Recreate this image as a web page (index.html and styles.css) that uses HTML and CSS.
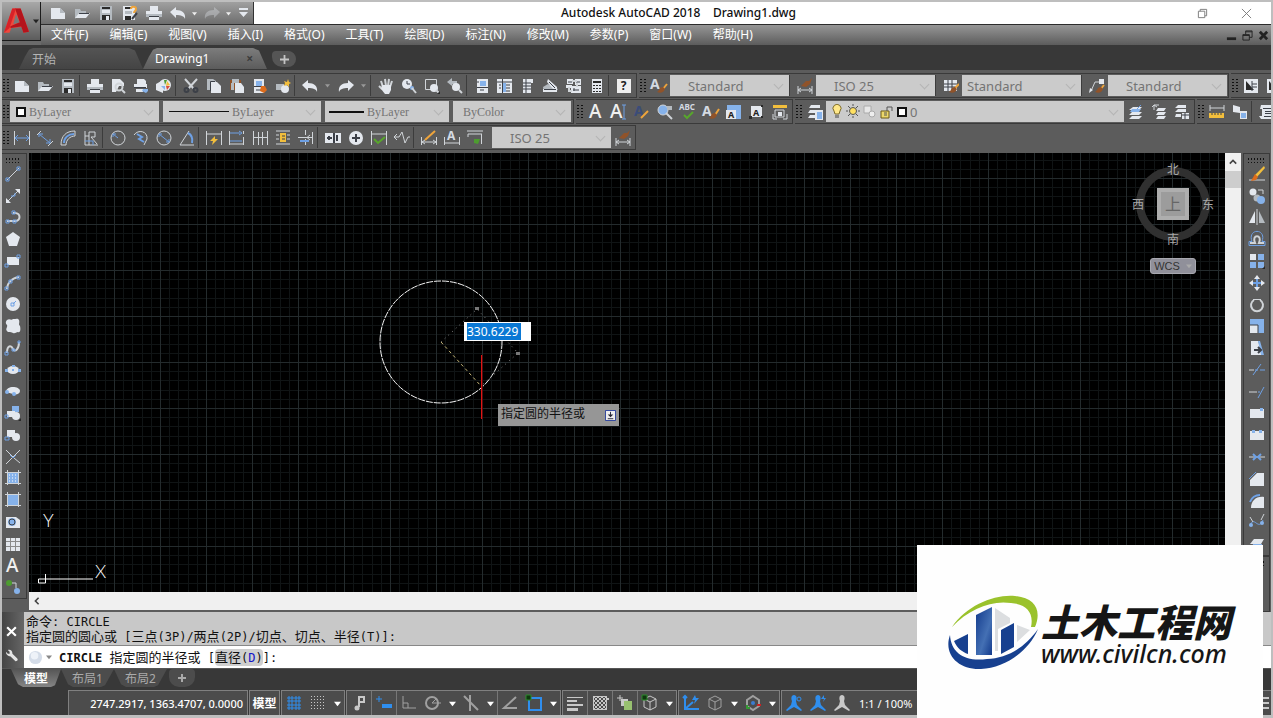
FILE: index.html
```html
<!DOCTYPE html>
<html lang="zh-CN">
<head>
<meta charset="utf-8">
<title>Autodesk AutoCAD 2018 Drawing1.dwg</title>
<link rel="stylesheet" href="styles.css">
</head>
<body>
<svg class="defs" aria-hidden="true">
  <symbol id="new" viewBox="0 0 16 16"><path class="fw" d="M1 3h9l5 5v6H1z"/><path class="fd" d="M10 3v5h5z"/></symbol>
  <symbol id="open" viewBox="0 0 16 16"><path class="fd" d="M1 4h5l1 2h5v2H5l-4 6z"/><path class="fw" d="M5 8h11l-4 5H1z"/><path class="k" d="M5 8.500h10"/></symbol>
  <symbol id="save" viewBox="0 0 16 16"><path class="fd" d="M2 1h12v14H2z"/><path class="fk" d="M4 2h8v2H4zM4 10h8v5H4z"/><path class="fw" d="M4 5h8v3H4zM8 11h3v4H8z"/></symbol>
  <symbol id="print" viewBox="0 0 16 16"><path class="fw" d="M4 1h8v5H4zM0 6h16v5H0z"/><path class="fd" d="M0 9h16v3H0z"/><path class="fw" d="M3 11h10v4H3z"/><path class="k" d="M3 11.500h10"/></symbol>
  <symbol id="undo" viewBox="0 0 16 16"><path class="fw" d="M0 7l6-5v3c6 0 10 3 9 9-1-3-4-4-9-4v3z"/></symbol>
  <symbol id="redo" viewBox="0 0 16 16"><path class="fw" d="M16 7l-6-5v3C4 5 0 8 1 14c1-3 4-4 9-4v3z"/></symbol>
  <symbol id="down" viewBox="0 0 8 8"><path d="M0 2h8L4 7z" fill="currentColor"/></symbol>
  <symbol id="dimbrush" viewBox="0 0 16 16"><path class="s" d="M1 8v8M15 8v8M1 12h14M1 12l3-2M1 12l3 2M15 12l-3-2M15 12l-3 2"/><path class="fbr" d="M4 8l5-5h3l3-3-2 6-4 3z"/></symbol>
  <symbol id="tabstyle" viewBox="0 0 16 16"><path class="fw" d="M1 2h13v11H1z"/><path class="k" d="M1 6h13M1 9h13M5 2v11M9 2v11"/><path class="o2" d="M16 6l-5 5"/><path class="fbr" d="M12 9c-4 0-3 3-6 5 4 2 7 0 8-3z"/></symbol>
  <symbol id="person" viewBox="0 0 16 16"><path d="M8 0c3 0 3 4 2 6l1 4 5 5-1 1-7-4-7 4-1-1 5-5 1-4C5 4 5 0 8 0z" fill="currentColor"/></symbol>
  <symbol id="cube" viewBox="0 0 16 16"><path d="M8 1l6 3v8l-6 3-6-3V4zM2 4l6 3 6-3M8 7v8" fill="none" stroke="currentColor"/></symbol>
</svg>

<div class="app">
  <header class="header">
    <button class="app-button" aria-label="应用程序菜单"><svg class="app-logo" viewBox="0 0 28 30"><path fill="#f0483c" d="M1 27L10 1h9l9 25-6 1-2-6-11 1-2 5z"/><path fill="#7a7a7a" d="M14 7l4 9-7 2z"/><path fill="#b4141c" d="M13 1h6l9 25-6 1zM8 20l12-5 1 5-13 2z"/><path fill="#d82228" d="M1 27L10 1h4L7 22z"/></svg><svg class="caret"><use href="#down"/></svg></button>
    <div class="titlebar">
      <nav class="quick" aria-label="快速访问">
        <button class="tool" aria-label="新建"><svg><use href="#new"/></svg></button>
        <button class="tool" aria-label="打开"><svg><use href="#open"/></svg></button>
        <button class="tool" aria-label="保存"><svg><use href="#save"/></svg></button>
        <button class="tool" aria-label="另存为"><svg viewBox="0 0 16 16"><path class="fw" d="M1 1h12v14H1z"/><path class="fk" d="M3 2h7v2H3zM3 11h6v4H3z"/><path class="fd" d="M3 6h7v3H3z"/><path class="k2" d="M15 8l-5 6"/><path class="o2" d="M9 4c0-3 5-3 5 0 0 2-2 2-2 4"/></svg></button>
        <button class="tool" aria-label="打印"><svg><use href="#print"/></svg></button>
        <button class="tool" aria-label="放弃"><svg><use href="#undo"/></svg></button>
        <button class="drop" aria-label="放弃列表"><svg><use href="#down"/></svg></button>
        <button class="tool off" aria-label="重做"><svg><use href="#redo"/></svg></button>
        <button class="drop" aria-label="重做列表"><svg><use href="#down"/></svg></button>
        <button class="tool" aria-label="自定义"><svg viewBox="0 0 16 16"><path class="fw" d="M4 3h9v2H4zM4 7h9l-4.500 5z"/></svg></button>
      </nav>
      <h1 class="title">Autodesk AutoCAD 2018 &nbsp;&nbsp; Drawing1.dwg</h1>
      <div class="window-buttons">
        <button aria-label="还原"><svg viewBox="0 0 12 12"><path d="M1.500 3.500h7v7h-7zM3.500 3.500v-2h7v7h-2" fill="none" stroke="#777"/></svg></button>
        <button aria-label="关闭"><svg viewBox="0 0 12 12"><path d="M1 1l10 10M11 1L1 11" fill="none" stroke="#777"/></svg></button>
      </div>
    </div>
    <div class="menubar">
      <nav class="menu">
        <button>文件(F)</button><button>编辑(E)</button><button>视图(V)</button><button>插入(I)</button><button>格式(O)</button><button>工具(T)</button><button>绘图(D)</button><button>标注(N)</button><button>修改(M)</button><button>参数(P)</button><button>窗口(W)</button><button>帮助(H)</button>
      </nav>
      <div class="doc-buttons">
        <button aria-label="最小化图形"><svg viewBox="0 0 12 12"><path d="M1 8h10v3H1z" fill="#222"/></svg></button>
        <button aria-label="还原图形"><svg viewBox="0 0 12 12"><path d="M1 5h7v6H1zM4 5V1h7v7H8M4 2h7M1 6h7" fill="none" stroke="#222"/></svg></button>
        <button aria-label="关闭图形"><svg viewBox="0 0 12 12"><path d="M2 2l8 8M10 2l-8 8" fill="none" stroke="#222" stroke-width="3"/></svg></button>
      </div>
    </div>
  </header>

  <nav class="file-tabs">
    <button class="file-tab">开始</button>
    <button class="file-tab current"><span>Drawing1</span><span class="tab-close">×</span></button>
    <button class="file-add" aria-label="新图形"><svg viewBox="0 0 10 10"><path d="M5 0v10M0 5h10" stroke="#c4c4c4" stroke-width="2"/></svg></button>
  </nav>

  <div class="toolbars">
    <div class="row">
      <div class="bar">
        <span class="grip"></span>
        <button class="tool" aria-label="新建"><svg><use href="#new"/></svg></button>
        <button class="tool" aria-label="打开"><svg><use href="#open"/></svg></button>
        <button class="tool" aria-label="保存"><svg><use href="#save"/></svg></button>
        <i class="sep"></i>
        <button class="tool" aria-label="打印"><svg><use href="#print"/></svg></button>
        <button class="tool" aria-label="打印预览"><svg viewBox="0 0 16 16"><path class="fw" d="M2 1h8l4 4v3H9l-3 6H2z"/><circle class="s2" cx="9" cy="9" r="3.500"/><path class="s2" d="M12 12l3 3"/></svg></button>
        <button class="tool" aria-label="发布"><svg viewBox="0 0 16 16"><path class="fw" d="M4 1h7l2 2v3H4zM1 6h13v4H1z"/><path class="k" d="M1 9.500h12"/><path class="fw" d="M3 11h7v3H3z"/><path class="fb" d="M10 11h5v2l-2 2-4-2z"/></svg></button>
        <button class="tool" aria-label="三维打印"><svg viewBox="0 0 16 16"><path class="fw" d="M0 6l7-4v13l-7-3z"/><circle class="fw" cx="9" cy="7" r="6"/><path class="fg" d="M8 2h3l-2 5z"/><path class="fy" d="M11 3l3 4-4 1z"/><path class="fr" d="M10 8h4l-3 4z"/><path class="fb" d="M5 8h4v4z"/></svg></button>
        <i class="sep"></i>
        <button class="tool" aria-label="剪切"><svg viewBox="0 0 16 16"><path class="s2" d="M2 1l9 10M14 1L5 11"/><circle class="k2" cx="3.500" cy="12" r="2"/><circle class="k2" cx="12.500" cy="12" r="2"/></svg></button>
        <button class="tool" aria-label="复制"><svg viewBox="0 0 16 16"><path class="fd" d="M1 1h6l3 2v9H1z"/><path class="k" d="M4.500 13V3.500H9"/><path class="fw" d="M5 4h6l4 4v7H5z"/></svg></button>
        <button class="tool" aria-label="粘贴"><svg viewBox="0 0 16 16"><path class="fbr" d="M1 2h11v10H1z"/><path class="fd" d="M3 1h7v4H3zM2 5h3v7H2z"/><path class="fw" d="M6 5h6l3 4v6H6z"/></svg></button>
        <button class="tool" aria-label="特性匹配"><svg viewBox="0 0 16 16"><path class="fw" d="M2 1h10v14H2z"/><path class="fb" d="M4 3h6v5H4z"/><path class="k" d="M2 8.500h10M4 12h5"/><path class="fo" d="M9 8h4l2 4-3 3-4-2z"/></svg></button>
        <button class="tool" aria-label="块编辑器"><svg viewBox="0 0 16 16"><path class="fd" d="M1 6h8v6H1z"/><circle class="fw" cx="10" cy="11" r="4"/><path class="fy" d="M9 3l3 1 1-3 1 3 2 1-2 1v3l-2-2-3 1 1-3z"/></svg></button>
        <i class="sep"></i>
        <button class="tool" aria-label="放弃"><svg><use href="#undo"/></svg></button>
        <button class="drop dim" aria-label="放弃列表"><svg><use href="#down"/></svg></button>
        <button class="tool" aria-label="重做"><svg><use href="#redo"/></svg></button>
        <button class="drop dim" aria-label="重做列表"><svg><use href="#down"/></svg></button>
        <i class="sep"></i>
        <button class="tool" aria-label="实时平移"><svg viewBox="0 0 16 16"><path class="s2" d="M5 9L3 3M8 8L7 1M10 8l1-7M12 9l2-6M4 11L1 8"/><path class="fw" d="M4 7h9v5l-2 4H7l-4-5z"/></svg></button>
        <button class="tool" aria-label="实时缩放"><svg viewBox="0 0 16 16"><circle class="fw" cx="6" cy="6" r="5"/><path class="k" d="M6 3v3h3"/><circle class="fb" cx="11" cy="10" r="2"/><path class="s2" d="M11 10l4 5"/></svg></button>
        <button class="tool" aria-label="窗口缩放"><svg viewBox="0 0 16 16"><path class="s" d="M1.500 1.500h11v10h-11z"/><circle class="fw" cx="10" cy="10" r="4"/><path class="s2" d="M12 12l3 3"/><path class="fk" d="M16 13v3h-3z"/></svg></button>
        <button class="tool" aria-label="缩放上一个"><svg viewBox="0 0 16 16"><path class="fd" d="M0 4l5-4v3h5v3H5v2z"/><circle class="fw" cx="9" cy="9" r="4"/><path class="s2" d="M12 12l3 3"/></svg></button>
        <i class="sep"></i>
        <button class="tool" aria-label="特性"><svg viewBox="0 0 16 16"><path class="fw" d="M3 1h11v14H3z"/><path class="fb" d="M6 3h6v5H6z"/><path class="k" d="M3 9.500h11M6 12h4M3 4h2"/></svg></button>
        <button class="tool" aria-label="设计中心"><svg viewBox="0 0 16 16"><path class="fw" d="M0 1h15v14H0z"/><path class="k" d="M5.500 1v14M0 4h15M8 7h5M8 10h5M8 13h5M2 7h2M2 10h2"/><path class="fb" d="M6 5h3v9H6z"/></svg></button>
        <button class="tool" aria-label="工具选项板"><svg viewBox="0 0 16 16"><path class="fw" d="M3 1h10v4h-2v10H3z"/><path class="k" d="M3 5h8M3 8h8M3 11h8M6 1v14"/></svg></button>
        <button class="tool" aria-label="图纸集"><svg viewBox="0 0 16 16"><path class="fd" d="M0 9l5-3 10 5-2 3H1z"/><path class="fw" d="M5 1l9 8v3l-4-1-6-7zM0 11h14v3H0z"/><path class="k" d="M6 4l6 6M1 11.500h12"/></svg></button>
        <button class="tool" aria-label="标记集"><svg viewBox="0 0 16 16"><path class="fw" d="M1 1h6v5H1zM9 1h6v6H9zM5 8h10v7H5zM0 7h6v3H0z"/><path class="k" d="M2 4h4M10 4h4M7 12h6M8 10v3"/><path class="s2" d="M3 9v4h3M11 5v4M6 3h5"/></svg></button>
        <button class="tool" aria-label="计算器"><svg viewBox="0 0 16 16"><path class="fw" d="M3 1h10v14H3z"/><path class="fk" d="M4 3h8v2H4zM4 7h2v1H4zM7 7h2v1H7zM10 7h2v1h-2zM4 10h2v1H4zM7 10h2v1H7zM10 10h2v1h-2zM4 13h2v1H4zM7 13h2v1H7zM10 13h2v1h-2z"/></svg></button>
        <i class="sep"></i>
        <button class="tool help" aria-label="帮助"><span>?</span></button>
      </div>
      <div class="bar">
        <span class="grip"></span>
        <button class="tool" aria-label="文字样式"><svg viewBox="0 0 16 16"><text class="ico-text" x="-1" y="11">A</text><path class="o2" d="M16 6l-4 5"/><path class="fbr" d="M12 9c-4 0-3 3-6 5 4 2 7 0 8-3z"/></svg></button>
        <span class="combo wide"><select aria-label="文字样式"><option>Standard</option></select></span>
        <i class="sep"></i>
        <button class="tool" aria-label="标注样式"><svg><use href="#dimbrush"/></svg></button>
        <span class="combo wide"><select aria-label="标注样式"><option>ISO 25</option></select></span>
        <i class="sep"></i>
        <button class="tool" aria-label="表格样式"><svg><use href="#tabstyle"/></svg></button>
        <span class="combo wide near"><select aria-label="表格样式"><option>Standard</option></select></span>
        <i class="sep"></i>
        <button class="tool" aria-label="多重引线样式"><svg viewBox="0 0 16 16"><path class="s" d="M2 13L6 4h5"/><path class="fw" d="M10 1h5v5h-5z"/><path class="fw" d="M0 15l1-5 3 2z"/><path class="o2" d="M15 7l-4 5"/><path class="fbr" d="M12 9c-4 0-3 3-6 5 4 2 7 0 8-3z"/></svg></button>
        <span class="combo wide"><select aria-label="多重引线样式"><option>Standard</option></select></span>
      </div>
      <div class="bar rest">
        <span class="grip"></span>
        <button class="tool" aria-label="视口"><svg viewBox="0 0 16 16"><path class="fw" d="M1 1h14v14H1z"/><path class="fk" d="M3 3v9h8z"/><path class="k" d="M9 3v10M9 6h5M9 9h5"/></svg></button>
        <button class="tool" aria-label="单个视口"><svg viewBox="0 0 16 16"><path class="fw" d="M1 1h14v14H1z"/><path class="fk" d="M3 3v9h8z"/></svg></button>
      </div>
    </div>

    <div class="row">
      <div class="bar props">
        <span class="grip"></span>
        <span class="combo serif c1"><i class="swatch"></i><select aria-label="颜色"><option>ByLayer</option></select></span>
        <span class="combo serif c2"><i class="line thin"></i><select aria-label="线型"><option>ByLayer</option></select></span>
        <span class="combo serif c3"><i class="line"></i><select aria-label="线宽"><option>ByLayer</option></select></span>
        <span class="combo serif c4"><select aria-label="打印样式"><option>ByColor</option></select></span>
      </div>
      <div class="bar">
        <span class="grip"></span>
        <button class="tool" aria-label="多行文字"><svg viewBox="0 0 16 16"><text class="ico-text big" x="1" y="14">A</text></svg></button>
        <button class="tool" aria-label="单行文字"><svg viewBox="0 0 16 16"><text class="ico-text big" x="-1" y="14">A</text><path class="b" d="M11 1h4M13 1v14M11 15h4"/></svg></button>
        <button class="tool" aria-label="编辑文字"><svg viewBox="0 0 16 16"><text class="ico-text blue" x="0" y="12">A</text><path class="o2" d="M14 7l-7 7"/></svg></button>
        <button class="tool" aria-label="查找"><svg viewBox="0 0 16 16"><circle class="fb" cx="6" cy="6" r="5"/><circle class="s" cx="6" cy="6" r="5"/><path class="s2" d="M9 9l6 6"/><path class="fd" d="M10 2h5v4h-5z"/></svg></button>
        <button class="tool" aria-label="拼写检查"><svg viewBox="0 0 16 16"><text class="ico-text tiny" x="-1" y="6">ABC</text><path class="g2" d="M4 11l3 3 6-6"/></svg></button>
        <button class="tool" aria-label="文字样式"><svg viewBox="0 0 16 16"><text class="ico-text" x="-1" y="12">A</text><path class="o2" d="M16 5l-4 6"/><path class="fbr" d="M12 9c-4 0-3 3-6 5 4 2 7 0 8-3z"/></svg></button>
        <button class="tool" aria-label="比例"><svg viewBox="0 0 16 16"><path class="fb" d="M1 1h14v14h-5V6H1z"/><path class="fw" d="M0 6h10v9H0z"/><text class="ico-text dark" x="2" y="14">A</text></svg></button>
        <button class="tool" aria-label="对正"><svg viewBox="0 0 16 16"><path class="fw" d="M2 2h11v11H2z"/><text class="ico-text dark" x="4" y="12">A</text><path class="fk" d="M0 12h3v3H0zM12 1h2v2h-2zM12 12h2v2h-2z"/></svg></button>
        <button class="tool" aria-label="空间转换"><svg viewBox="0 0 16 16"><path class="fy" d="M1 1h14v3H1z"/><path class="s" d="M3 6h9v7H3zM1 10v5h4M15 10v5h-4"/><path class="fw" d="M6 8h4v4H6z"/></svg></button>
      </div>
      <div class="bar">
        <span class="grip"></span>
        <button class="tool" aria-label="图层特性"><svg viewBox="0 0 16 16"><path class="fw" d="M4 1h9v3H2zM3 6h6v3H1zM3 11h5v3H1z"/><path class="fw" d="M8 6h8v10H8z"/><path class="fb" d="M10 8h5v7h-5z"/></svg></button>
        <span class="combo layer">
          <span class="layer-icons"><svg viewBox="0 0 64 16">
            <path d="M3 7a4 4 0 1 1 6 0l-1 3H4z" fill="#ffe88a" stroke="#7c6a28"/><path d="M4 11h4v3H4z" fill="#888"/>
            <circle cx="22" cy="7" r="3.500" fill="#ffe060" stroke="#555"/><path d="M22 0v2M22 12v2M15 7h2M27 7h2M17 2l2 2M27 2l-2 2M17 12l2-2M27 12l-2-2" stroke="#555"/>
            <path d="M33 2h7v7h-7z" fill="#e8e8e8" stroke="#aaa"/><circle cx="41" cy="10" r="3" fill="#eee" stroke="#aaa"/>
            <path d="M50 7h8v7h-8z" fill="#ecd76a" stroke="#6d5a18"/><path d="M56 7V3h5v4M53 9h3M53 11h3" fill="none" stroke="#555"/></svg></span>
          <i class="swatch"></i><select aria-label="图层"><option>0</option></select></span>
        <button class="tool" aria-label="置为当前"><svg viewBox="0 0 16 16"><path class="fw" d="M5 3h9l-3 3H1zM4 8h10l-3 3H1zM4 12h10l-3 3H1z"/><path class="fb" d="M4 5h9l-2 3H2z"/><path class="b" d="M9 5l4-4"/></svg></button>
        <button class="tool" aria-label="上一个图层"><svg viewBox="0 0 16 16"><path class="fw" d="M7 4h8l-2 3H5zM7 8h8l-2 3H5zM7 12h8l-2 3H5z"/><path class="s" d="M3 6V1h5M1 3l2-2 3 2"/></svg></button>
        <button class="tool" aria-label="图层状态"><svg viewBox="0 0 16 16"><path class="fw" d="M4 1h8v3H1zM4 5h8v3H1zM2 10h5v3H1zM8 9h7v6H8z"/><path class="k" d="M8 11h7M11 9v6"/></svg></button>
      </div>
      <div class="bar rest">
        <span class="grip"></span>
        <button class="tool" aria-label="距离"><svg viewBox="0 0 16 16"><path class="s" d="M1 1v6M15 1v6M1 4h14"/><path class="fy" d="M0 9h15v5H0z"/><path class="k" d="M3 9v2M6 9v2M9 9v2M12 9v2"/></svg></button>
        <button class="tool" aria-label="列表"><svg viewBox="0 0 16 16"><path class="fw" d="M1 1l7 2v6l-7-1zM8 7h7v8H8z"/><path class="fb" d="M9 9h5v5H9z"/></svg></button>
        <i class="sep"></i>
        <button class="tool" aria-label="查询"><svg viewBox="0 0 16 16"><path class="fw" d="M2 1h12l1 3H5v8h10v3H2l-2-3h3V5H1z"/><path class="fw" d="M5 5h9v7H5z"/><path class="k" d="M4 4.500h9M6 7.500h6M6 9.500h6M5 12.500h8"/></svg></button>
      </div>
    </div>

    <div class="row">
      <div class="bar">
        <span class="grip"></span>
        <button class="tool" aria-label="线性"><svg viewBox="0 0 16 16"><path class="s" d="M.5 1v14M15.500 1v14"/><path class="b" d="M1 8h14M4 5L1 8l3 3M12 5l3 3-3 3"/></svg></button>
        <button class="tool" aria-label="对齐"><svg viewBox="0 0 16 16"><path class="b" d="M2 4l11 9M2 7V4h4M13 9v4H9"/><path class="s" d="M4 1L0 5M16 11l-5 5"/></svg></button>
        <button class="tool" aria-label="弧长"><svg viewBox="0 0 16 16"><path class="s" d="M1 15C1 6 6 1 15 1M6 15c0-5 4-9 9-9M15 1v5M1 15h5"/><path class="b2" d="M4 13c0-5 4-9 10-9"/></svg></button>
        <button class="tool" aria-label="坐标"><svg viewBox="0 0 16 16"><path class="s" d="M2 1v14h13M6 15V2h6v5H8l6 7M2 6h4"/><path class="b" d="M2 11h8v4"/></svg></button>
        <i class="sep"></i>
        <button class="tool" aria-label="半径"><svg viewBox="0 0 16 16"><circle class="s" cx="8" cy="8" r="7"/><path class="b" d="M8 8L3 4M3 7V4h3"/></svg></button>
        <button class="tool" aria-label="折弯"><svg viewBox="0 0 16 16"><path class="s" d="M1 5C5-1 15 1 14 9l-3 6"/><path class="b2" d="M4 4l5 3-3 2 5 3"/></svg></button>
        <button class="tool" aria-label="直径"><svg viewBox="0 0 16 16"><circle class="s" cx="8" cy="8" r="7"/><path class="b" d="M3 4l10 8M3 7V4h3M13 9v3h-3"/></svg></button>
        <button class="tool" aria-label="角度"><svg viewBox="0 0 16 16"><path class="s" d="M15 15H1L10 1"/><path class="b2" d="M9 3c4 2 5 5 4 10"/></svg></button>
        <i class="sep"></i>
        <button class="tool" aria-label="快速标注"><svg viewBox="0 0 16 16"><path class="s" d="M.5 1v14M15.500 1v14M1 4h14"/><path class="fy" d="M9 6l-5 5h3l-1 4 6-6H9z"/></svg></button>
        <button class="tool" aria-label="基线"><svg viewBox="0 0 16 16"><path class="s" d="M.5 1v14M14.500 1v3M14.500 7v8M1 14h13"/><path class="b" d="M1 3h10M1 11h12M10 1l3 2-3 2"/></svg></button>
        <button class="tool" aria-label="连续"><svg viewBox="0 0 16 16"><path class="s" d="M1.500 1v14M6.500 2v13M10.500 2v13M15.500 1v14M1 7.500h14"/></svg></button>
        <button class="tool" aria-label="等距标注"><svg viewBox="0 0 16 16"><path class="s" d="M1 1h14M1 5h3M1 9h3M1 14h14M12 5h3M12 9h3"/><path class="fy" d="M5 3h6v9H5z"/><path class="k" d="M7 6h3M7 9h3"/></svg></button>
        <button class="tool" aria-label="折断标注"><svg viewBox="0 0 16 16"><path class="s" d="M14.500 2v12M0 7.500h14M7.500 0v5M7.500 9v6M12 5l-3 2.500 3 2.500"/><path class="b2" d="M2 11h9"/></svg></button>
        <i class="sep"></i>
        <button class="tool" aria-label="公差"><svg viewBox="0 0 16 16"><path class="fw" d="M0 3h16v10H0z"/><path class="k2" d="M9 3v10M2 8h5M4 6v4M12 5v6"/></svg></button>
        <button class="tool" aria-label="圆心标记"><svg viewBox="0 0 16 16"><circle class="fw" cx="8" cy="8" r="7"/><path class="k2" d="M8 4v8M4 8h8"/></svg></button>
        <button class="tool" aria-label="检验"><svg viewBox="0 0 16 16"><path class="s" d="M.5 1v14M15.500 1v14M1 4h14"/><path class="g2" d="M3 9l4 4 7-6"/></svg></button>
        <button class="tool" aria-label="折弯线性"><svg viewBox="0 0 16 16"><path class="s" d="M0 7h5l3-5 3 11 3-6h2M3 4L0 7l3 3"/></svg></button>
        <i class="sep"></i>
        <button class="tool" aria-label="编辑标注"><svg viewBox="0 0 16 16"><path class="s" d="M.5 7v8M15.500 7v8M1 12h14M4 10l-3 2 3 2M12 10l3 2-3 2"/><path class="o2" d="M4 10l10-9"/></svg></button>
        <button class="tool" aria-label="编辑标注文字"><svg viewBox="0 0 16 16"><text class="ico-text mid" x="3" y="10">A</text><path class="s" d="M.5 7v8M15.500 7v8M1 13h14"/></svg></button>
        <button class="tool" aria-label="标注更新"><svg viewBox="0 0 16 16"><path class="s" d="M0 1h16M1 4h14M14.500 4v10M1 4v3"/><path class="fg" d="M7 9h6l-2 5-4-1z"/></svg></button>
        <i class="sep wider"></i>
        <span class="combo wide"><select aria-label="标注样式控制"><option>ISO 25</option></select></span>
        <button class="tool" aria-label="标注样式"><svg><use href="#dimbrush"/></svg></button>
      </div>
    </div>
  </div>

  <main class="work">
    <aside class="side left">
      <span class="grip flat"></span>
      <button aria-label="直线"><svg viewBox="0 0 16 16"><path class="s" d="M2 14L14 2"/><path class="b" d="M1 12h3v3H1zM12 1h3v3h-3z"/></svg></button>
      <button aria-label="构造线"><svg viewBox="0 0 16 16"><path class="s" d="M2 14L14 2"/><path class="fw" d="M15 1v5l-5-5zM1 15v-5l5 5z"/><path class="b" d="M6 8h4v-3"/></svg></button>
      <button aria-label="多段线"><svg viewBox="0 0 16 16"><path class="s2" d="M2 12h8c6 0 6-8 0-8H8"/><path class="b" d="M1 11h3v3H1zM7 2h3v3H7zM8 11h3v3H8z"/></svg></button>
      <button aria-label="多边形"><svg viewBox="0 0 16 16"><path class="fw" d="M8 1l7 5-3 9H4L1 6z"/></svg></button>
      <button aria-label="矩形"><svg viewBox="0 0 16 16"><path class="fw" d="M2 4h12v8H2z"/><path class="b" d="M0 11h3v3H0zM12 2h3v3h-3z"/></svg></button>
      <button aria-label="圆弧"><svg viewBox="0 0 16 16"><path class="s2" d="M2 14C2 8 7 3 14 2"/><path class="b" d="M0 12h3v3H0zM4 5h3v3H4zM12 1h3v3h-3z"/></svg></button>
      <button aria-label="圆"><svg viewBox="0 0 16 16"><circle class="fw" cx="8" cy="8" r="7"/><path class="b" d="M6 7h3v3H6zM8 8l3-3"/></svg></button>
      <button aria-label="修订云线"><svg viewBox="0 0 16 16"><path class="fw" d="M2 2c3-2 4 1 6-1 3 0 5-1 6 1 1 3-1 4 1 6 1 4 0 7-2 6-2 0-3 2-5 1-3-2-5 0-6-2-2-2 1-4 0-6-2-2-1-4 0-5z"/></svg></button>
      <button aria-label="样条曲线"><svg viewBox="0 0 16 16"><path class="s2" d="M2 13C2 5 6 5 8 9s6 0 6-7"/><path class="b" d="M0 12h3v3H0zM7 9h3v2H7zM13 1h2v2h-2z"/></svg></button>
      <button aria-label="椭圆"><svg viewBox="0 0 16 16"><ellipse class="fw" cx="8" cy="8" rx="6" ry="4"/><path class="fb" d="M0 7h3v3H0zM13 7h3v3h-3zM7 3h3v2H7zM7 7h2v2H7z"/></svg></button>
      <button aria-label="椭圆弧"><svg viewBox="0 0 16 16"><path class="fw" d="M1 9c0-7 14-6 14-1 0 3-4 4-7 3z"/><circle class="fb" cx="9" cy="11" r="2"/><circle class="fb" cx="2" cy="9" r="2"/></svg></button>
      <button aria-label="插入块"><svg viewBox="0 0 16 16"><path class="fb" d="M7 1h7v6H7z"/><path class="fw" d="M2 6h8v6H2z"/><circle class="fw" cx="11" cy="11" r="4"/><path class="b" d="M0 10h3v3H0z"/><path class="fk" d="M16 13v3h-3z"/></svg></button>
      <button aria-label="创建块"><svg viewBox="0 0 16 16"><path class="fw" d="M2 3h8v7H2z"/><circle class="fw" cx="11" cy="10" r="4"/><path class="b" d="M0 10h4v3H0z"/></svg></button>
      <button aria-label="点"><svg viewBox="0 0 16 16"><path class="s" d="M1 15L15 1M1 1l7 7M9 9l6 5"/><path class="b" d="M5 6l3 3 3-3"/></svg></button>
      <button aria-label="图案填充"><svg viewBox="0 0 16 16"><path class="fb" d="M3 3h10v10H3z"/><path class="w1" d="M4 5h8M4 8h8M4 11h8" stroke-dasharray="1 2"/><path class="s" d="M2.500 0v15M13.500 0v15M0 2.500h16M0 13.500h16"/></svg></button>
      <button aria-label="渐变色"><svg viewBox="0 0 16 16"><path class="fb" d="M3 3h10v10H3z"/><path class="s" d="M2.500 0v15M13.500 0v15M0 2.500h16M0 13.500h16"/></svg></button>
      <button aria-label="面域"><svg viewBox="0 0 16 16"><path class="fw" d="M1 3h10l4 3v8H1z"/><circle class="fb" cx="7" cy="8" r="4"/><circle class="k" cx="7" cy="8" r="3"/></svg></button>
      <button aria-label="表格"><svg viewBox="0 0 16 16"><path class="fw" d="M1 2h14v13H1z"/><path class="grid-line" d="M1 5.500h14M1 10.500h14M5.500 2v13M10.500 2v13"/></svg></button>
      <button aria-label="多行文字"><svg viewBox="0 0 16 16"><text class="ico-text big" x="1" y="15">A</text></svg></button>
      <button aria-label="添加选定对象"><svg viewBox="0 0 16 16"><circle class="fg" cx="4" cy="4" r="3"/><path class="s" d="M7 4h4v5"/><circle class="fb" cx="12" cy="12" r="3"/></svg></button>
    </aside>

    <div class="viewport">
      <div class="canvas">
        <svg class="drawing">
          <defs><pattern id="grid" x="39" y="25" width="46" height="46" patternUnits="userSpaceOnUse"><path class="minor" d="M9.500 0v46M18.500 0v46M28.500 0v46M37.500 0v46M0 9.500h46M0 18.500h46M0 28.500h46M0 37.500h46"/><path class="major" d="M.5 0v46M0 .5h46"/></pattern></defs>
          <rect width="100%" height="100%" fill="url(#grid)"/>
          <circle class="shape" cx="412" cy="189" r="61"/>
          <path class="track" d="M412 189l40 44"/>
          <path class="ghost" d="M412 189l36-33 41 44-37 33"/>
          <path d="M446 154h4v3h-4zM487 199h4v3h-4z" fill="#777"/>
          <rect x="452" y="202" width="1" height="64" fill="#e01414"/>
          <rect x="453" y="202" width="1" height="64" fill="#501010"/>
          <g class="ucs"><path d="M16.500 421v9h-7v-4H64"/><text x="14" y="374">Y</text><text x="66" y="425">X</text></g>
        </svg>
        <div class="cursor-input"><input aria-label="半径" value="330.6229"></div>
        <div class="cursor-tip"><span>指定圆的半径或</span><svg viewBox="0 0 12 12"><path d="M.5.5h11v11H.5z" fill="#eee" stroke="#223a9a"/><path d="M6 2v4M3 9.500h6" stroke="#223"/><path d="M3 5h6L6 8z" fill="#223"/></svg></div>
        <div class="viewcube">
          <svg viewBox="0 0 84 84"><circle cx="42" cy="42" r="33" fill="none" stroke="#303030" stroke-width="8"/></svg>
          <span class="n">北</span><span class="s-label">南</span><span class="w">西</span><span class="e">东</span>
          <button class="face">上</button>
        </div>
        <button class="wcs">WCS <svg><use href="#down"/></svg></button>
      </div>
      <div class="vscroll"><button aria-label="向上滚动"><svg viewBox="0 0 10 10"><path d="M1 7l4-4 4 4" fill="none" stroke="#444" stroke-width="2"/></svg></button><span class="thumb"></span></div>
      <div class="hscroll"><button aria-label="向左滚动"><svg viewBox="0 0 10 10"><path d="M7 1L3 5l4 4" fill="none" stroke="#444" stroke-width="2"/></svg></button></div>
    </div>

    <div class="right-dock">
      <aside class="side modify">
        <span class="grip flat"></span>
        <button aria-label="删除"><svg viewBox="0 0 16 16"><path class="s" d="M0 14h16"/><path class="fy" d="M15 0l1 2-8 9-2-2z"/><path class="fo" d="M6 8l3 3-2 3-5 1z"/></svg></button>
        <button aria-label="复制"><svg viewBox="0 0 16 16"><circle class="fw" cx="4" cy="4" r="3.500"/><circle class="fd" cx="8" cy="10" r="3.500"/><circle class="fb" cx="12" cy="12" r="4"/><path class="s" d="M9 2h5v4"/></svg></button>
        <button aria-label="镜像"><svg viewBox="0 0 16 16"><path class="fw" d="M6 2v12H0z"/><path class="fd" d="M10 2v12h6z"/><path class="s" d="M8 0v16"/></svg></button>
        <button aria-label="偏移"><svg viewBox="0 0 16 16"><path class="b" d="M0 14.500h16v-4h-3C18-3-2-3 3 10.500H0z"/><path class="s2" d="M1 12h5C2 3 14 3 10 12h5"/></svg></button>
        <button aria-label="阵列"><svg viewBox="0 0 16 16"><path class="fw" d="M1 1h6v6H1z"/><path class="fb" d="M9 1h6v6H9zM1 9h6v6H1zM9 9h6v6H9z"/><path class="fk" d="M16 13v3h-3z"/></svg></button>
        <button aria-label="移动"><svg viewBox="0 0 16 16"><path class="fw" d="M8 0l3 4H5zM8 16l3-4H5zM0 8l4-3v6zM16 8l-4-3v6z"/><path class="b2" d="M8 4v8M4 8h8"/></svg></button>
        <button aria-label="旋转"><svg viewBox="0 0 16 16"><path class="s2" d="M5 3a6 6 0 1 0 6 0"/><path class="s" d="M4 2.500h8"/></svg></button>
        <button aria-label="缩放"><svg viewBox="0 0 16 16"><path class="fb" d="M1 1h14v14H1z"/><path class="fw" d="M1 7h8v8H1z"/><path class="k" d="M1 7h8v8"/></svg></button>
        <button aria-label="拉伸"><svg viewBox="0 0 16 16"><path class="fw" d="M2 1h7l5 14H2z"/><path class="fb" d="M9 1h2l4 14h-3z"/><path class="k2" d="M5 10h6M9 7l3 3-3 3"/></svg></button>
        <button aria-label="修剪"><svg viewBox="0 0 16 16"><path class="s" d="M0 8h5"/><path class="b" d="M6 8h3M11 8h5M4 13l8-11"/></svg></button>
        <button aria-label="延伸"><svg viewBox="0 0 16 16"><path class="s" d="M0 8h8"/><path class="b" d="M9 8h2M9 14l6-11"/></svg></button>
        <button aria-label="打断于点"><svg viewBox="0 0 16 16"><path class="fw" d="M1 4h14v9H1z"/><path class="fb" d="M11 3h3v3h-3z"/></svg></button>
        <button aria-label="打断"><svg viewBox="0 0 16 16"><path class="fw" d="M1 4h14v9H1z"/><path class="fb" d="M3 3h3v3H3zM10 3h3v3h-3z"/></svg></button>
        <button aria-label="合并"><svg viewBox="0 0 16 16"><path class="s" d="M0 8h16"/><path class="b2" d="M4 5l3 3-3 3M12 5L9 8l3 3"/></svg></button>
        <button aria-label="倒角"><svg viewBox="0 0 16 16"><path class="fw" d="M1 9l7-7h7v13H1z"/><path class="b" d="M0 8l7-7"/></svg></button>
        <button aria-label="圆角"><svg viewBox="0 0 16 16"><path class="fw" d="M2 15C2 8 7 3 15 4v11z"/><path class="b2" d="M1 9c2-5 5-7 10-7"/></svg></button>
        <button aria-label="光顺曲线"><svg viewBox="0 0 16 16"><path class="b" d="M1 12C5 0 9 18 14 6"/><path class="s" d="M1 3l3 5M12 6l3-6"/><circle class="fb" cx="2" cy="11" r="2"/><circle class="fb" cx="13" cy="9" r="2"/></svg></button>
        <button aria-label="分解"><svg viewBox="0 0 16 16"><path class="fw" d="M5 3h10l-3 5H1z"/><path class="fb" d="M4 8h9v6H2z"/></svg></button>
      </aside>
      <aside class="side order">
        <span class="grip flat"></span>
        <button aria-label="前置"><svg viewBox="0 0 16 16"><path class="fw" d="M4 6h10v4H4z"/></svg></button>
        <button aria-label="后置"><svg viewBox="0 0 16 16"><path class="fw" d="M4 6h10v4H4z"/></svg></button>
      </aside>
    </div>
  </main>

  <section class="command">
    <div class="command-tools">
      <button aria-label="关闭命令行"><svg viewBox="0 0 12 12"><path d="M2 2l8 8M10 2l-8 8" stroke="#fff" stroke-width="2"/></svg></button>
      <button aria-label="自定义命令行"><svg viewBox="0 0 14 14"><path d="M1 3l2 2h2V3L3 1c3-1 5 1 5 4l5 5c2 2-1 4-2 3L6 8C3 8 1 6 1 3z" fill="#e4e4e4"/></svg></button>
    </div>
    <div class="command-body">
      <div class="history">
        <p><span class="cjk">命令</span>: CIRCLE</p>
        <p><span class="cjk">指定圆的圆心或</span> [<span class="cjk">三点</span>(3P)/<span class="cjk">两点</span>(2P)/<span class="cjk">切点、切点、半径</span>(T)]:</p>
      </div>
      <div class="prompt">
        <svg class="prompt-icon" viewBox="0 0 16 16"><circle cx="8" cy="8" r="7" fill="#d4dce8"/><circle cx="7" cy="6" r="4" fill="#eef2f8"/></svg>
        <svg class="caret"><use href="#down"/></svg>
        <p><b>CIRCLE</b> <span class="cjk">指定圆的半径或</span> [<button class="option"><span class="cjk">直径</span>(<em>D</em>)</button>]:</p>
      </div>
    </div>
  </section>

  <nav class="layout-tabs">
    <button class="current">模型</button><button>布局1</button><button>布局2</button><button class="add" aria-label="新建布局"><svg viewBox="0 0 10 10"><path d="M5 1v8M1 5h8" stroke="#aaa" stroke-width="2"/></svg></button>
  </nav>

  <footer class="status">
    <div class="group coords">2747.2917, 1363.4707, 0.0000</div>
    <div class="group"><button class="model">模型</button></div>
    <div class="group">
      <button class="on" aria-label="栅格"><svg viewBox="0 0 16 16"><path d="M3 1v14M6 1v14M10 1v14M13 1v14M1 3h14M1 6h14M1 10h14M1 13h14" stroke="currentColor"/></svg></button>
      <button aria-label="捕捉"><svg viewBox="0 0 16 16"><path d="M1 1.500h15M1 4.500h15M1 7.500h15M1 10.500h15M1 13.500h15" stroke="currentColor" stroke-dasharray="1 2"/></svg></button>
      <button class="arrow" aria-label="捕捉设置"><svg><use href="#down"/></svg></button>
    </div>
    <div class="group">
      <button aria-label="推断约束"><svg viewBox="0 0 16 16"><path d="M8 2h5v5H8zM8 3v9" fill="none" stroke="currentColor" stroke-width="2"/><circle cx="6" cy="13" r="2.500" fill="currentColor"/></svg></button>
      <button class="on cut" aria-label="动态输入"><svg viewBox="0 0 16 16"><path d="M3 1v6M0 4h6" stroke="currentColor"/><path d="M6 9h10v4H6z" fill="currentColor"/></svg></button>
      <button class="cut quiet" aria-label="正交"><svg viewBox="0 0 16 16"><path d="M2 1v12h13M2 8h5v5" fill="none" stroke="currentColor"/></svg></button>
      <button class="quiet" aria-label="极轴"><svg viewBox="0 0 16 16"><circle cx="7" cy="8" r="6" fill="none" stroke="currentColor" stroke-width="2"/><path d="M7 8h9M7 8l5-5" stroke="currentColor"/></svg></button>
      <button class="arrow" aria-label="极轴设置"><svg><use href="#down"/></svg></button>
      <button class="quiet" aria-label="等轴测"><svg viewBox="0 0 16 16"><path d="M1 1l14 14M7 0v16" stroke="currentColor" stroke-width="2"/></svg></button>
      <button class="arrow" aria-label="等轴测设置"><svg><use href="#down"/></svg></button>
      <button class="cut quiet" aria-label="对象追踪"><svg viewBox="0 0 16 16"><path d="M14 2L2 13h13" fill="none" stroke="currentColor" stroke-width="2"/></svg></button>
      <button class="on" aria-label="对象捕捉"><svg viewBox="0 0 16 16"><path d="M3 3h12v12H3z" fill="none" stroke="currentColor" stroke-width="2"/><path d="M0 0h5v5H0z" fill="#103810" stroke="#2c8a2c"/></svg></button>
      <button class="arrow" aria-label="对象捕捉设置"><svg><use href="#down"/></svg></button>
    </div>
    <div class="group">
      <button aria-label="线宽"><svg viewBox="0 0 16 16"><path d="M0 2h16v1H0zM0 5h10v2H0zM0 9h16v2H0zM0 13h11v3H0z" fill="currentColor"/></svg></button>
      <button class="cut" aria-label="透明度"><svg viewBox="0 0 16 16"><path d="M1 2h14M1 6h14M1 10h14M1 14h14M3 4h14M3 8h12M3 12h12" stroke="currentColor" stroke-width="2" stroke-dasharray="2 2"/><path d="M1.500 1.500h13v13h-13z" fill="none" stroke="currentColor"/></svg></button>
      <button class="cut" aria-label="选择循环"><svg viewBox="0 0 16 16"><path d="M3 0v6M0 3h6" stroke="currentColor"/><path d="M4 4h7v7H4z" fill="#c8c8c8"/><path d="M7 6h8v9H7z" fill="#98c070"/></svg></button>
      <button class="cut" aria-label="三维对象捕捉"><svg viewBox="0 0 16 16"><use href="#cube"/><path d="M0 0h5v5H0z" fill="#103810" stroke="#2c8a2c"/></svg></button>
      <button class="arrow" aria-label="三维对象捕捉设置"><svg><use href="#down"/></svg></button>
    </div>
    <div class="group">
      <button class="on" aria-label="动态UCS"><svg viewBox="0 0 16 16"><path d="M2 1v13h14M2 14l8-7M0 3l2-2 2 2" fill="none" stroke="currentColor" stroke-width="2"/><path d="M12 0l-3 5h3l-1 4 5-6h-3z" fill="currentColor"/></svg></button>
      <button class="quiet" aria-label="选择过滤"><svg><use href="#cube"/></svg></button>
      <button class="arrow" aria-label="过滤设置"><svg><use href="#down"/></svg></button>
      <button class="quiet" aria-label="小控件"><svg viewBox="0 0 16 16"><path d="M8 1l6 4v6l-6 4-6-4V5z" fill="none" stroke="currentColor" stroke-width="2"/><circle cx="8" cy="8" r="2" fill="#3c7cd0"/><path d="M12 10h4" stroke="#c22" stroke-width="2"/><path d="M2 10v3h3" stroke="#393" fill="none" stroke-width="2"/></svg></button>
      <button class="arrow" aria-label="小控件设置"><svg><use href="#down"/></svg></button>
    </div>
    <div class="group last">
      <button class="on" aria-label="注释可见性"><svg viewBox="0 0 16 16"><use href="#person"/><circle cx="13" cy="4" r="2" fill="none" stroke="currentColor"/></svg></button>
      <button class="on" aria-label="自动缩放"><svg viewBox="0 0 16 16"><use href="#person"/><path d="M14 0l-3 4h3l-1 3 3-4h-2z" fill="currentColor"/></svg></button>
      <button aria-label="注释比例"><svg><use href="#person"/></svg></button>
      <button class="scale">1:1 / 100%</button>
      <button class="burger" aria-label="自定义状态栏"><svg viewBox="0 0 16 16"><path d="M2 3h12M2 8h12M2 13h12" stroke="currentColor" stroke-width="2"/></svg></button>
    </div>
  </footer>
</div>

<aside class="brand">
  <svg viewBox="0 0 94 78">
    <defs><linearGradient id="tower" x1="0" y1="0" x2="1" y2="1"><stop offset="0" stop-color="#123a8c"/><stop offset=".6" stop-color="#4470b4"/><stop offset="1" stop-color="#123a8c"/></linearGradient></defs>
    <path fill="#dcdee0" d="M48 15l15 10v5l-12 6v22h-3zM70 32l13 5-13 12z"/>
    <path fill="url(#tower)" d="M29 22l16-8v48H29z"/>
    <path fill="#17408f" d="M7 48l14-7v20c-6-2-11-6-14-13zM54 37l13-7v24l-13 7z"/>
    <path fill="#9ac22c" d="M5 34C20 12 48 1 68 3c20 2 27 14 20 31l-4 0c3-14-4-23-20-24C44 7 22 16 5 34z"/>
    <path fill="#17408f" d="M3 42C-4 62 12 77 34 76c24-1 48-18 57-40-14 20-32 29-51 30C18 69 4 60 3 42z"/>
  </svg>
  <div class="brand-text"><strong>土木工程网</strong><span>www.civilcn.com</span></div>
</aside>
</body>
</html>
```
FILE: styles.css
```css
* { box-sizing: border-box; }
body { margin: 0; height: 100vh; overflow: hidden; position: relative; background: #bebebe; font-family: "Noto Sans", "Noto Sans CJK SC", sans-serif; font-size: 12px; color: #eee; }
button { margin: 0; padding: 0; border: 0; background: none; color: inherit; font: inherit; display: flex; align-items: center; justify-content: center; }
p, h1 { margin: 0; }
svg { display: block; flex: none; }
.defs { position: absolute; width: 0; height: 0; }
.app { height: 100%; padding: 2px 2px 3px; display: flex; flex-direction: column; }

/* icon palette */
.fw { fill: #e4e8ee; }
.fd { fill: #b4bac0; }
.fk { fill: #2a2a2a; }
.fb { fill: #86b2ea; }
.fy { fill: #f2be3c; }
.fo { fill: #dd6c1c; }
.fr { fill: #d84a3c; }
.fg { fill: #4d9c30; }
.fbr { fill: #90532a; }
.s, .s2, .b, .b2, .k, .k2, .o2, .g2, .w1 { fill: none; stroke: #d0d4d8; }
.s2, .b2, .k2, .o2, .g2 { stroke-width: 2; }
.b, .b2 { stroke: #6ea0e4; }
.k, .k2 { stroke: #3c4048; }
.o2 { stroke: #eea43c; }
.g2 { stroke: #58a62c; }
.w1 { stroke: #fff; }
.grid-line { stroke: #8a8a8a; }
.ico-text { font: 700 14px "Noto Sans", sans-serif; fill: #d4dae2; }
.ico-text.big { font-size: 19px; font-weight: 500; fill: #f0f0f0; }
.ico-text.mid { font-size: 12px; }
.ico-text.tiny { font-size: 8px; }
.ico-text.dark { font-size: 9px; fill: #222; }
.ico-text.blue { fill: #3b4c78; }

/* header */
.header { display: grid; grid-template: 23px 20px / 39px 1fr; background: #6a6a6a; }
.app-button { grid-row: 1 / 3; height: 39px; gap: 4px; border: solid #1c1c1c; border-width: 0 1px 1px 0; background: linear-gradient(#a8a8a8, #5c5c5c); color: #222; }
.app-logo { width: 26px; height: 29px; }
.caret { width: 6px; height: 6px; }
.titlebar { display: flex; background: #fff; border-bottom: 1px solid #2c2c2c; }
.quick { display: flex; width: 213px; padding-left: 5px; background: linear-gradient(#a0a0a0, #6e6e6e); border-right: 1px solid #333; }
.tool { width: 23px; flex: none; }
.tool svg, .side svg { width: 16px; height: 16px; overflow: visible; }
.quick .tool { width: 24px; }
.quick .tool:last-child { width: 20px; }
.quick .drop { width: 12px; }
.off { opacity: .35; }
.drop { width: 13px; }
.drop svg { width: 5px; height: 5px; }
.dim { color: #999; }
.title { flex: 1; text-align: center; padding-right: 76px; font-size: 12px; font-weight: 500; line-height: 22px; color: #111; white-space: pre; }
.window-buttons { display: flex; padding-right: 4px; }
.window-buttons button { width: 46px; }
.window-buttons button + button { width: 42px; }
.window-buttons svg, .doc-buttons svg { width: 11px; height: 11px; }
.menubar { display: flex; justify-content: space-between; background: linear-gradient(#969696, #5c5c5c); }
.menu { display: flex; gap: 21px; padding-left: 10px; color: #fff; line-height: 18px; }
.doc-buttons { display: flex; gap: 5px; padding-right: 2px; }

/* drawing tabs */
.file-tabs { height: 25px; padding: 3px 0 1px 17px; display: flex; background: #383838; }
.file-tab { width: 124px; padding: 0 13px; justify-content: flex-start; background: linear-gradient(#545454, #444); color: #b4b4b4; clip-path: polygon(0 100%, 6px 40%, 10px 8%, 14px 0, 110px 0, 116px 12%, 124px 100%); }
.file-tab.current { justify-content: space-between; padding: 0 14px 0 12px; background: linear-gradient(#7c7c7c, #5c5c5c); color: #fff; }
.tab-close { color: #3c3c3c; font-weight: 700; }
.file-add { width: 24px; height: 16px; margin: 3px 0 0 5px; border-radius: 4px 8px 8px 10px; background: #555; }
.file-add svg { width: 9px; height: 9px; }

/* toolbars */
.toolbars { display: flex; flex-direction: column; gap: 1px; padding: 3px 0; background: #5c5c5c; overflow: hidden; }
.row { display: flex; gap: 2px; height: 25px; }
.bar { display: flex; flex: none; align-items: stretch; border: 1px solid #3a3a3a; border-left: 0; background: #5c5c5c; padding-right: 1px; }
.bar.rest { flex: 1; overflow: hidden; min-width: 0; padding: 0; border-right: 0; }
.grip { width: 8px; flex: none; margin: 4px 0 3px; background: radial-gradient(circle, #111 1px, transparent 1px) 0 0 / 4px 3px; }
.sep { width: 4px; flex: none; border-left: 1px solid #3c3c3c; margin: 1px 0; }
.sep.wider { width: 6px; border: 0; }
.help span { width: 14px; height: 14px; background: #eee; color: #222; font-weight: 700; line-height: 14px; }
.combo { position: relative; display: flex; align-items: center; flex: none; margin: 1px 0; background: #cbcbcb; }
.combo select { appearance: none; flex: 1; min-width: 0; align-self: stretch; border: 0; border-radius: 0; background: none; padding: 0 16px 0 6px; color: #747474; font: 13px "Noto Sans", sans-serif; opacity: 1; }
.combo::after { content: ""; position: absolute; right: 7px; top: 6px; width: 6px; height: 6px; border: solid #b4b4b4; border-width: 0 1px 1px 0; transform: rotate(45deg); }
.wide { width: 119px; }
.wide select { padding-left: 18px; }
.wide.near select { padding-left: 5px; }
.props { gap: 4px; padding-right: 2px; }
.props .grip { margin-right: -4px; }
.combo.serif select { font: 12px "Liberation Serif", serif; padding-left: 3px; }
.c1 { width: 149px; padding-left: 6px; }
.c2 { width: 158px; padding-left: 6px; }
.c3 { width: 124px; padding-left: 4px; }
.c4 { width: 118px; padding-left: 7px; }
.swatch { width: 10px; height: 10px; border: 2px solid #111; background: #fff; flex: none; }
.line { width: 35px; height: 2px; background: #111; }
.line.thin { width: 60px; height: 1px; }
.layer { width: 298px; padding-left: 5px; }
.layer-icons svg { width: 64px; height: 16px; }
.layer .swatch { margin-left: 2px; }
.layer select { padding-left: 3px; }

/* work area */
.work { flex: 1; min-height: 0; display: flex; background: #5c5c5c; }
.side { display: flex; flex-direction: column; width: 25px; border: 1px solid #3a3a3a; border-left: 0; }
.side button { flex: 1; min-height: 0; }
.left { width: 25px; margin: 0 2px 13px 0; padding-right: 3px; }
.grip.flat { width: auto; height: 6px; margin: 3px 3px 0; background-size: 3px 4px; }
.viewport { flex: 1; min-width: 0; display: grid; grid-template: 1fr 18px / 1fr 16px; margin-bottom: 2px; }
.canvas { position: relative; overflow: hidden; background: #000; }
.drawing { width: 100%; height: 100%; }
.minor { stroke: #101415; fill: none; }
.major { stroke: #242b2d; fill: none; }
.shape { fill: none; stroke: #f4f4f4; stroke-dasharray: 7 1; }
.track { fill: none; stroke: #c8b878; stroke-dasharray: 3 3; }
.ghost { fill: none; stroke: #888; stroke-dasharray: 1 4; }
.ucs path { fill: none; stroke: #fff; }
.ucs text { font: 300 18px Lato, sans-serif; fill: #fff; }
.cursor-input { position: absolute; left: 435px; top: 169px; width: 67px; height: 19px; padding: 1px 10px 1px 3px; background: #fff; }
.cursor-input input { display: block; width: 100%; height: 17px; padding: 0; border: 0; background: #0a78d4; color: #fff; font: 12px "Noto Sans", sans-serif; }
.cursor-tip { position: absolute; left: 469px; top: 251px; width: 121px; height: 22px; padding: 0 3px; display: flex; align-items: center; justify-content: space-between; background: #969696; color: #111; line-height: 20px; }
.cursor-tip span { align-self: flex-start; }
.cursor-tip svg { width: 11px; height: 11px; }
.viewcube { position: absolute; right: 10px; top: 9px; width: 84px; height: 86px; color: #a8a8a8; line-height: 16px; }
.viewcube > * { position: absolute; }
.viewcube svg { left: 0; top: 0; width: 84px; height: 84px; }
.n, .s-label { left: 36px; }
.n { top: 0; }
.s-label { bottom: 0; }
.w, .e { top: 35px; }
.w { left: 1px; }
.e { right: 1px; }
.face { left: 26px; top: 26px; width: 32px; height: 32px; border: 4px solid #aeaeae; background: #9c9c9c; color: #666; font-size: 16px; }
.wcs { position: absolute; right: 29px; top: 105px; width: 46px; height: 16px; gap: 6px; border: 1px solid #a8a8b0; border-radius: 3px; background: #90909a; color: #333; font: 11px "Liberation Sans", sans-serif; }
.wcs svg { width: 6px; height: 6px; color: #aaa; }
.vscroll, .hscroll { background: #f0f0f0; }
.vscroll button { width: 16px; height: 18px; }
.vscroll svg, .hscroll svg { width: 8px; height: 8px; }
.thumb { display: block; height: 17px; background: #cdcdcd; }
.hscroll { grid-column: 1 / 3; }
.hscroll button { width: 16px; height: 18px; }
.right-dock { display: flex; flex-direction: column; width: 28px; margin-left: 2px; }
.right-dock .side { width: 27px; border-left: 1px solid #3a3a3a; }
.modify { height: 403px; }
.order { flex: 1; }

/* command line */
.command { height: 56px; flex: none; display: flex; color: #111; background: #5c5c5c; }
.command-tools { width: 22px; padding: 7px 3px 0 0; display: flex; flex-direction: column; justify-content: space-around; align-items: center; background: linear-gradient(90deg, #444, #666); }
.command-tools svg { width: 13px; height: 13px; }
.command-body { flex: 1; display: flex; flex-direction: column; font: 12px "DejaVu Sans Mono", monospace; }
.cjk { font-family: "Noto Sans CJK SC", sans-serif; font-size: 13px; }
.history { height: 33px; padding: 1px 2px; background: #c8c8c8; }
.history p { line-height: 15px; white-space: nowrap; height: 15px; }
.prompt { flex: 1; display: flex; align-items: center; gap: 3px; padding-left: 4px; background: #fff; border-top: 1px solid #888; color: #111; }
.prompt p { line-height: 20px; padding-left: 4px; }
.prompt-icon { width: 15px; height: 15px; }
.prompt .caret { color: #888; }
.option { display: inline-block; border-radius: 4px; background: #cfcfcf; line-height: 16px; }
.option em { color: #1414c8; font-style: normal; }

/* layout tabs */
.layout-tabs { height: 22px; flex: none; display: flex; padding: 0 0 3px 9px; background: #383838; border-top: 1px solid #555; }
.layout-tabs button { width: 50px; background: #4c4c4c; color: #aaa; clip-path: polygon(0 0, 100% 0, 44px 90%, 40px 100%, 12px 100%, 7px 85%); }
.layout-tabs button + button { width: 53px; }
.layout-tabs button.current { background: linear-gradient(#555, #858585); color: #fff; font-weight: 700; }
.layout-tabs button.add { width: 26px; clip-path: none; border-radius: 4px 4px 10px 10px; margin-left: 2px; }
.add svg { width: 10px; height: 10px; }

/* status bar */
.status { height: 25px; flex: none; display: flex; gap: 1px; padding-left: 66px; background: #383838; color: #c8c8c8; }
.group { display: flex; flex: none; border: 1px solid #808080; border-width: 1px 1px 0; background: #4c4c4c; }
.group button { width: 24px; }
.group svg { width: 16px; height: 16px; overflow: visible; }
.group .cut { border-left: 1px solid #777; width: 25px; }
.group .arrow { width: 14px; color: #fff; }
.group .arrow svg { width: 7px; height: 7px; }
.group .on { color: #2f8eee; }
.group .quiet { color: #a0a0a0; }
.group.coords { width: 180px; justify-content: flex-end; align-items: center; padding-right: 4px; color: #fff; font-size: 11px; font-weight: 500; }
.group .model { width: 29px; color: #fff; font-weight: 700; }
.group.last { flex: 1; border-right: 0; }
.group .scale { width: auto; padding-left: 5px; color: #fff; font-size: 11px; }
.group .burger { margin-left: auto; width: 16px; }

/* site mark */
.brand { position: absolute; right: 10px; bottom: 0; width: 346px; height: 173px; display: flex; align-items: center; padding-left: 30px; background: #fefefe; color: #161616; }
.brand svg { width: 94px; height: 78px; }
.brand-text { display: flex; flex-direction: column; font-style: italic; white-space: nowrap; }
.brand-text strong { font: italic 900 38px "Noto Sans CJK SC", sans-serif; line-height: 42px; }
.brand-text span { font: italic 500 25px "Noto Sans", sans-serif; line-height: 22px; }
```
